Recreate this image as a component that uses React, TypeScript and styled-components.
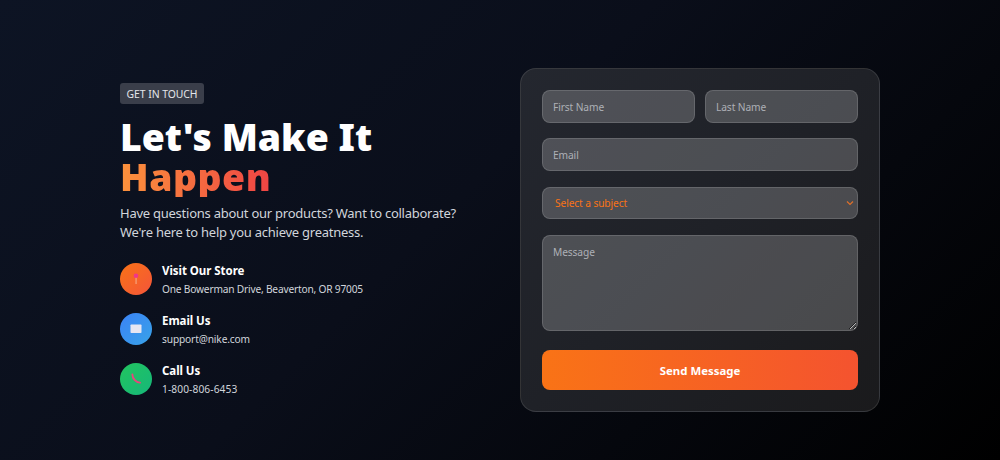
import React from 'react'
import styled, { createGlobalStyle } from 'styled-components'

const GlobalStyle = createGlobalStyle`
  html, body {
    margin: 0;
    height: 100%;
    background: #000;
  }
  * {
    box-sizing: border-box;
  }
`

const Page = styled.div`
  width: 1000px;
  height: 460px;
  overflow: hidden;
  padding: 68px 120px 0;
  display: grid;
  grid-template-columns: 360px 360px;
  column-gap: 40px;
  align-items: start;
  font-family: 'Noto Sans', 'Open Sans', sans-serif;
  color: #fff;
  background: linear-gradient(135deg, #0d1424 0%, #0a0e1a 45%, #000 100%);
`

const Intro = styled.section`
  padding-top: 15px;
`

const Badge = styled.span`
  display: block;
  width: 84px;
  height: 21px;
  border-radius: 3px;
  background: #3a3e4a;
  color: #e5e7eb;
  font-size: 10.4px;
  line-height: 22px;
  text-align: center;
  letter-spacing: -0.05px;
`

const Title = styled.h1`
  margin: 13px 0 0;
  font-size: 37.4px;
  line-height: 40px;
  font-weight: 900;
  color: #fff;
`

const Accent = styled.span`
  display: block;
  width: fit-content;
  letter-spacing: 0.5px;
  background: linear-gradient(90deg, #fb923c, #ef4444);
  -webkit-background-clip: text;
  background-clip: text;
  -webkit-text-fill-color: transparent;
`

const Lead = styled.p`
  margin: 7px 0 0;
  font-size: 13px;
  line-height: 19px;
  letter-spacing: -0.25px;
  white-space: nowrap;
  color: #d1d5db;
`

const ContactList = styled.ul`
  list-style: none;
  margin: 21px 0 0;
  padding: 0;
  display: flex;
  flex-direction: column;
  gap: 18px;
`

const ContactItem = styled.li`
  display: flex;
  align-items: center;
  gap: 10px;
  height: 32px;
`

const IconDisc = styled.div<{ $from: string; $to: string }>`
  width: 32px;
  height: 32px;
  border-radius: 50%;
  flex: none;
  display: flex;
  align-items: center;
  justify-content: center;
  background: linear-gradient(135deg, ${p => p.$from}, ${p => p.$to});
`

const ContactBody = styled.div`
  padding-top: 2px;
`

const ContactTitle = styled.div`
  font-size: 11.5px;
  line-height: 16px;
  font-weight: 700;
  letter-spacing: -0.05px;
  color: #fff;
`

const ContactText = styled.div<{ $spacing: number }>`
  margin-top: 2px;
  font-size: 10.2px;
  line-height: 16px;
  letter-spacing: ${p => p.$spacing}px;
  color: #d1d5db;
`

const Card = styled.form`
  height: 344px;
  padding: 21px;
  border: 1px solid rgba(255, 255, 255, 0.11);
  border-radius: 16px;
  background: linear-gradient(135deg, #24272f 0%, #1f2127 50%, #1a1a1c 100%);
  display: flex;
  flex-direction: column;
`

const NameRow = styled.div`
  display: grid;
  grid-template-columns: 1fr 1fr;
  gap: 10px;
`

const fieldStyles = `
  display: block;
  width: 100%;
  border: 1px solid rgba(255, 255, 255, 0.14);
  border-radius: 8px;
  background-color: rgba(255, 255, 255, 0.2);
  font-family: 'Noto Sans', 'Open Sans', sans-serif;
  font-size: 10.2px;
  letter-spacing: -0.1px;
  color: #fff;
  outline: none;
  &::placeholder {
    color: #adb0b6;
    opacity: 1;
  }
`

const Input = styled.input<{ $gap?: number }>`
  ${fieldStyles}
  height: 33px;
  padding: 0 10px;
  margin-top: ${p => p.$gap ?? 0}px;
`

const chevron = encodeURIComponent(
  '<svg xmlns="http://www.w3.org/2000/svg" width="8" height="6" viewBox="0 0 8 6"><path d="M1 1.5 L4 4.5 L7 1.5" fill="none" stroke="#e0702a" stroke-width="1.2"/></svg>'
)

const Select = styled.select`
  ${fieldStyles}
  height: 32px;
  margin-top: 16px;
  padding: 0 12px;
  appearance: none;
  color: #f97316;
  background-image: url("data:image/svg+xml,${chevron}");
  background-repeat: no-repeat;
  background-position: right 3px center;
`

const Message = styled.textarea`
  ${fieldStyles}
  height: 96px;
  margin-top: 16px;
  padding: 9px 10px;
  resize: vertical;
`

const SendButton = styled.button`
  height: 40px;
  margin-top: 19px;
  border: none;
  border-radius: 8px;
  background: linear-gradient(90deg, #f97316, #f4532f);
  color: #fff;
  font-family: 'Noto Sans', 'Open Sans', sans-serif;
  font-size: 11.4px;
  font-weight: 700;
`

const PinIcon = () => (
  <svg width="12" height="14" viewBox="0 0 12 14">
    <rect x="5.6" y="5" width="0.9" height="7" fill="#f5b898" />
    <circle cx="6" cy="3.8" r="2.3" fill="#f0368a" />
  </svg>
)

const MailIcon = () => (
  <svg width="14" height="12" viewBox="0 0 14 12">
    <rect x="1.5" y="1.5" width="11" height="8.5" rx="0.8" fill="#e6e6f2" />
  </svg>
)

const PhoneIcon = () => (
  <svg width="14" height="14" viewBox="0 0 14 14">
    <path d="M3.4 2.4 C3.4 6.4 6.6 10.4 11 10.6" fill="none" stroke="#e8457c" strokeWidth="1.9" strokeLinecap="round" />
  </svg>
)

const contacts = [
  { title: 'Visit Our Store', text: 'One Bowerman Drive, Beaverton, OR 97005', spacing: -0.2, from: '#f97316', to: '#f4553a', icon: <PinIcon /> },
  { title: 'Email Us', text: 'support@nike.com', spacing: -0.15, from: '#3b82f6', to: '#38a3e8', icon: <MailIcon /> },
  { title: 'Call Us', text: '1-800-806-6453', spacing: 0.1, from: '#22c55e', to: '#16b77a', icon: <PhoneIcon /> },
]

const App = () => (
  <Page>
    <GlobalStyle />
    <Intro>
      <Badge>GET IN TOUCH</Badge>
      <Title>
        Let's Make It
        <Accent>Happen</Accent>
      </Title>
      <Lead>
        Have questions about our products? Want to collaborate?
        <br />
        We're here to help you achieve greatness.
      </Lead>
      <ContactList>
        {contacts.map(c => (
          <ContactItem key={c.title}>
            <IconDisc $from={c.from} $to={c.to}>{c.icon}</IconDisc>
            <ContactBody>
              <ContactTitle>{c.title}</ContactTitle>
              <ContactText $spacing={c.spacing}>{c.text}</ContactText>
            </ContactBody>
          </ContactItem>
        ))}
      </ContactList>
    </Intro>
    <Card onSubmit={e => e.preventDefault()}>
      <NameRow>
        <Input placeholder="First Name" />
        <Input placeholder="Last Name" />
      </NameRow>
      <Input placeholder="Email" $gap={15} />
      <Select defaultValue="">
        <option value="">Select a subject</option>
      </Select>
      <Message placeholder="Message" />
      <SendButton type="submit">Send Message</SendButton>
    </Card>
  </Page>
)

export default App
